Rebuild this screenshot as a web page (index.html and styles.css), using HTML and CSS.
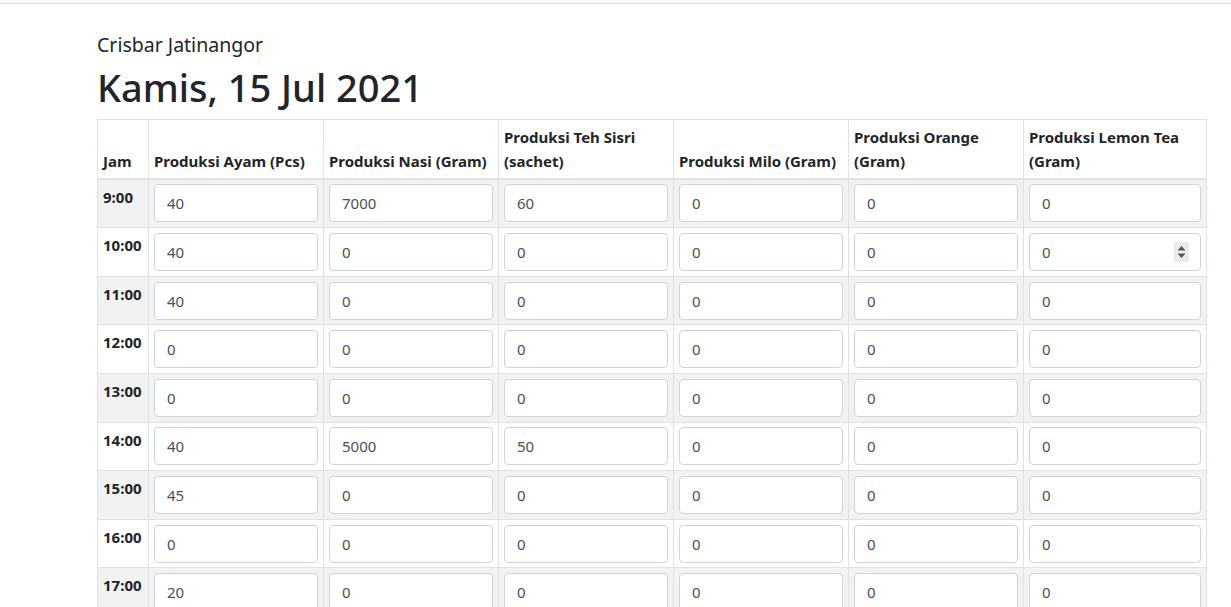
FILE: index.html
```html
<!DOCTYPE html>
<html lang="id">
<head>
<meta charset="utf-8">
<title>Crisbar Jatinangor</title>
<link rel="stylesheet" href="styles.css">
</head>
<body>
<div class="topbar"></div>
<main class="container">
  <h5 class="outlet">Crisbar Jatinangor</h5>
  <h1 class="date">Kamis, 15 Jul 2021</h1>
  <table class="prod">
    <colgroup>
      <col class="c-jam"><col class="c-n"><col class="c-n"><col class="c-n"><col class="c-n"><col class="c-n"><col class="c-last">
    </colgroup>
    <thead>
      <tr>
        <th>Jam</th>
        <th>Produksi Ayam (Pcs)</th>
        <th>Produksi Nasi (Gram)</th>
        <th>Produksi Teh Sisri (sachet)</th>
        <th>Produksi Milo (Gram)</th>
        <th>Produksi Orange (Gram)</th>
        <th>Produksi Lemon Tea (Gram)</th>
      </tr>
    </thead>
    <tbody>
      <tr><th>9:00</th><td><input value="40"></td><td><input value="7000"></td><td><input value="60"></td><td><input value="0"></td><td><input value="0"></td><td><input value="0"></td></tr>
      <tr><th>10:00</th><td><input value="40"></td><td><input value="0"></td><td><input value="0"></td><td><input value="0"></td><td><input value="0"></td><td><div class="spin-wrap"><input value="0"><span class="spin"><svg width="9" height="14" viewBox="0 0 9 14"><path d="M4.5 1 L8.5 5.5 H0.5 Z M0.5 8.5 H8.5 L4.5 13 Z" fill="#555"/></svg></span></div></td></tr>
      <tr><th>11:00</th><td><input value="40"></td><td><input value="0"></td><td><input value="0"></td><td><input value="0"></td><td><input value="0"></td><td><input value="0"></td></tr>
      <tr><th>12:00</th><td><input value="0"></td><td><input value="0"></td><td><input value="0"></td><td><input value="0"></td><td><input value="0"></td><td><input value="0"></td></tr>
      <tr><th>13:00</th><td><input value="0"></td><td><input value="0"></td><td><input value="0"></td><td><input value="0"></td><td><input value="0"></td><td><input value="0"></td></tr>
      <tr><th>14:00</th><td><input value="40"></td><td><input value="5000"></td><td><input value="50"></td><td><input value="0"></td><td><input value="0"></td><td><input value="0"></td></tr>
      <tr><th>15:00</th><td><input value="45"></td><td><input value="0"></td><td><input value="0"></td><td><input value="0"></td><td><input value="0"></td><td><input value="0"></td></tr>
      <tr><th>16:00</th><td><input value="0"></td><td><input value="0"></td><td><input value="0"></td><td><input value="0"></td><td><input value="0"></td><td><input value="0"></td></tr>
      <tr><th>17:00</th><td><input value="20"></td><td><input value="0"></td><td><input value="0"></td><td><input value="0"></td><td><input value="0"></td><td><input value="0"></td></tr>
    </tbody>
  </table>
</main>
</body>
</html>
```
FILE: styles.css
```css
html, body {
  margin: 0;
  padding: 0;
  background: #fff;
  color: #212529;
  font-family: "Noto Sans", "Open Sans", sans-serif;
  font-size: 16px;
  line-height: 1.5;
}

.topbar {
  height: 3px;
  border-bottom: 1px solid #dcdcdc;
}

.container {
  padding: 29px 0 0 97px;
}

.outlet {
  margin: 0 0 9px 0;
  font-size: 19.5px;
  font-weight: 400;
  line-height: 1.2;
}

.date {
  margin: 0 0 8px 0;
  font-size: 38px;
  font-weight: 500;
  line-height: 1.2;
}

.prod {
  width: 1110px;
  border-collapse: collapse;
  table-layout: fixed;
}

.c-jam { width: 51px; }
.c-n { width: 175px; }
.c-last { width: 183px; }

.prod th,
.prod td {
  border: 1px solid #dee2e6;
  padding: 4.8px 5px;
  text-align: left;
}

.prod thead th {
  vertical-align: bottom;
  border-bottom: 2px solid #dee2e6;
  font-size: 15px;
  font-weight: 700;
  line-height: 24px;
}

.prod tbody th {
  vertical-align: top;
  font-size: 15px;
  font-weight: 700;
  padding-top: 6px;
}

.prod tbody tr:nth-child(odd) {
  background: #f2f2f2;
}

.prod input {
  display: block;
  box-sizing: border-box;
  width: 100%;
  height: 38px;
  padding: 6px 12px;
  font-family: inherit;
  font-size: 15px;
  color: #495057;
  background: #fff;
  border: 1px solid #ced4da;
  border-radius: 4px;
  outline: none;
}

.spin-wrap {
  position: relative;
}

.spin {
  position: absolute;
  right: 12px;
  top: 9px;
  width: 15px;
  height: 20px;
  background: #ebebeb;
  display: flex;
  align-items: center;
  justify-content: center;
}
```
